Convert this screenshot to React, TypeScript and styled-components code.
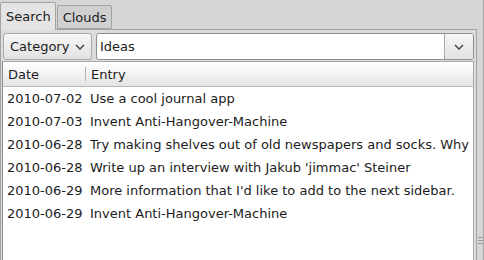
import React, { FC } from 'react';
import styled, { createGlobalStyle } from 'styled-components';

const GlobalStyle = createGlobalStyle`
  html, body {
    margin: 0;
    padding: 0;
    background: #d6d6d6;
    font-family: 'DejaVu Sans', 'Liberation Sans', sans-serif;
    font-size: 13px;
    color: #1c1c1c;
    overflow: hidden;
  }
`;

const Window = styled.div`
  display: flex;
  width: 484px;
  height: 260px;
  overflow: hidden;
`;

const Main = styled.div`
  display: flex;
  flex-direction: column;
  width: 477px;
`;

const TabBar = styled.div`
  display: flex;
  align-items: flex-end;
  height: 30px;
  padding-top: 2px;
  box-sizing: border-box;
  position: relative;
  z-index: 1;
  margin-bottom: -1px;
`;

const Tab = styled.div<{ $active?: boolean }>`
  display: flex;
  align-items: center;
  box-sizing: border-box;
  padding: 0 4px 0 5px;
  height: ${(p) => (p.$active ? '28px' : '24px')};
  margin-bottom: ${(p) => (p.$active ? '0' : '1px')};
  border: 1px solid #a3a3a3;
  border-bottom: ${(p) => (p.$active ? 'none' : '1px solid #a3a3a3')};
  border-radius: 2px 2px 0 0;
  background: ${(p) => (p.$active ? '#e4e4e4' : '#d0d0d0')};
  margin-right: 1px;
  color: #1c1c1c;
`;

const Pane = styled.div`
  flex: 1;
  display: flex;
  flex-direction: column;
  border: 1px solid #a3a3a3;
  border-bottom: none;
  background: #dcdcdc;
  padding: 3px 1px 0 1px;
  min-height: 0;
`;

const Toolbar = styled.div`
  display: flex;
  gap: 4px;
  padding-left: 1px;
  margin-bottom: 1px;
  height: 27px;
`;

const ComboButton = styled.div`
  display: flex;
  align-items: center;
  justify-content: space-between;
  box-sizing: border-box;
  width: 89px;
  padding: 0 6px 0 6px;
  border: 1px solid #a9a9a9;
  border-radius: 3px;
  background: linear-gradient(#f6f6f6, #e2e2e2);
`;

const ComboEntry = styled.div`
  flex: 1;
  display: flex;
  box-sizing: border-box;
  border: 1px solid #8e8e8e;
  border-radius: 3px;
  background: #ffffff;
  overflow: hidden;
  margin-right: 1px;
`;

const EntryText = styled.div`
  flex: 1;
  display: flex;
  align-items: center;
  padding-left: 3px;
`;

const ArrowButton = styled.div`
  width: 28px;
  display: flex;
  align-items: center;
  justify-content: center;
  border-left: 1px solid #a9a9a9;
  background: linear-gradient(#f6f6f6, #e2e2e2);
`;

const Tree = styled.div`
  flex: 1;
  display: flex;
  flex-direction: column;
  background: #ffffff;
  border-left: 1px solid #8e8e8e;
  border-top: 1px solid #a9a9a9;
  border-right: 1px solid #a9a9a9;
  margin-right: 1px;
  min-height: 0;
  overflow: hidden;
`;

const Header = styled.div`
  display: flex;
  height: 24px;
  flex-shrink: 0;
  background: linear-gradient(#ffffff, #f4f4f4 45%, #e4e4e4);
  border-bottom: 1px solid #b8b8b8;
`;

const HeaderCell = styled.div<{ $width?: number }>`
  display: flex;
  align-items: center;
  box-sizing: border-box;
  padding-left: 5px;
  ${(p) => (p.$width ? `width: ${p.$width}px;` : 'flex: 1;')}
  position: relative;
`;

const HeaderSep = styled.span`
  position: absolute;
  right: 0;
  top: 5px;
  bottom: 5px;
  width: 1px;
  background: #b4b4b4;
`;

const Rows = styled.div`
  padding-top: 0;
`;

const Row = styled.div`
  display: flex;
  height: 23px;
  align-items: center;
  white-space: nowrap;
`;

const DateCell = styled.div`
  width: 87px;
  padding-left: 4px;
  box-sizing: border-box;
  flex-shrink: 0;
`;

const TextCell = styled.div`
  flex: 1;
  overflow: hidden;
`;

const Splitter = styled.div`
  width: 7px;
  display: flex;
  flex-direction: column;
  justify-content: flex-end;
  align-items: center;
  padding-bottom: 16px;
  box-sizing: border-box;
  border-right: 1px solid #a3a3a3;
  gap: 2px;
`;

const Grip = styled.span`
  display: block;
  width: 5px;
  height: 1px;
  background: #9a9a9a;
`;

const Chevron: FC = () => (
  <svg width="10" height="6" viewBox="0 0 10 6">
    <path d="M1 1 L5 5 L9 1" fill="none" stroke="#3a3a3a" strokeWidth="1.3" />
  </svg>
);

const entries = [
  ['2010-07-02', 'Use a cool journal app'],
  ['2010-07-03', 'Invent Anti-Hangover-Machine'],
  ['2010-06-28', 'Try making shelves out of old newspapers and socks. Why'],
  ['2010-06-28', "Write up an interview with Jakub 'jimmac' Steiner"],
  ['2010-06-29', "More information that I'd like to add to the next sidebar."],
  ['2010-06-29', 'Invent Anti-Hangover-Machine'],
];

const App: FC = () => (
  <Window>
    <GlobalStyle />
    <Main>
      <TabBar>
        <Tab $active>Search</Tab>
        <Tab>Clouds</Tab>
      </TabBar>
      <Pane>
        <Toolbar>
          <ComboButton>
            <span>Category</span>
            <Chevron />
          </ComboButton>
          <ComboEntry>
            <EntryText>Ideas</EntryText>
            <ArrowButton>
              <Chevron />
            </ArrowButton>
          </ComboEntry>
        </Toolbar>
        <Tree>
          <Header>
            <HeaderCell $width={83}>
              Date
              <HeaderSep />
            </HeaderCell>
            <HeaderCell>Entry</HeaderCell>
          </Header>
          <Rows>
            {entries.map(([date, text], i) => (
              <Row key={i}>
                <DateCell>{date}</DateCell>
                <TextCell>{text}</TextCell>
              </Row>
            ))}
          </Rows>
        </Tree>
      </Pane>
    </Main>
    <Splitter>
      <Grip />
      <Grip />
      <Grip />
    </Splitter>
  </Window>
);

export default App;
